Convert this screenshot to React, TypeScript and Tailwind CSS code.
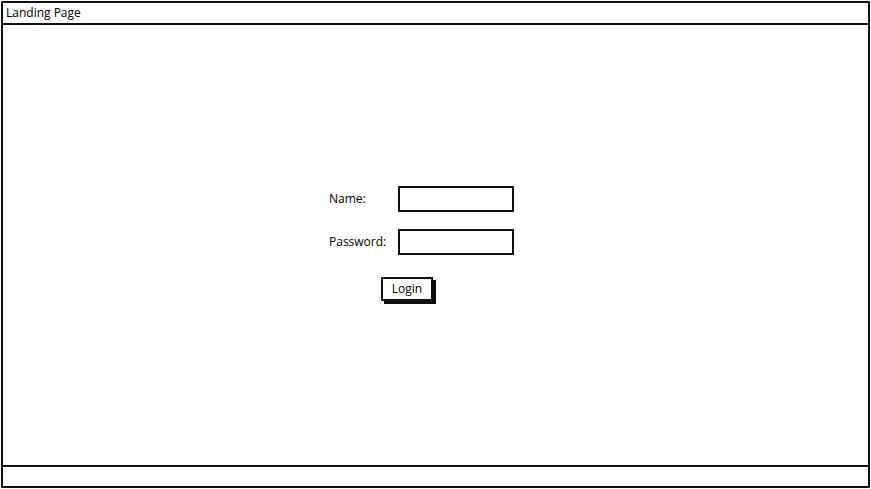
const font = { fontFamily: '"Open Sans", "Liberation Sans", sans-serif' };

const App = () => {
  return (
    <div className="w-[871px] h-[489px] bg-white p-px" style={font}>
      <div className="w-full h-full flex flex-col border-2 border-[#111] rounded-[1px]">
        <div className="h-[22px] flex items-center px-[3px] border-b-2 border-[#111] text-[12px] text-black">
          Landing Page
        </div>

        <div className="flex-1 pt-[161px] pl-[326px]">
          <div className="grid grid-cols-[69px_116px] gap-y-[17px] items-center text-[12px] text-black">
            <span>Name:</span>
            <div className="h-[26px] border-2 border-[#111] bg-white" />
            <span>Password:</span>
            <div className="h-[26px] border-2 border-[#111] bg-white" />
          </div>
          <div className="pl-[52px] pt-[20px]">
            <button className="w-[52px] h-[24px] border-2 border-[#111] bg-white text-[12px] text-black shadow-[3px_3px_0_#111]">
              Login
            </button>
          </div>
        </div>

        <div className="h-[21px] border-t-2 border-[#111]" />
      </div>
    </div>
  );
};

export default App;
